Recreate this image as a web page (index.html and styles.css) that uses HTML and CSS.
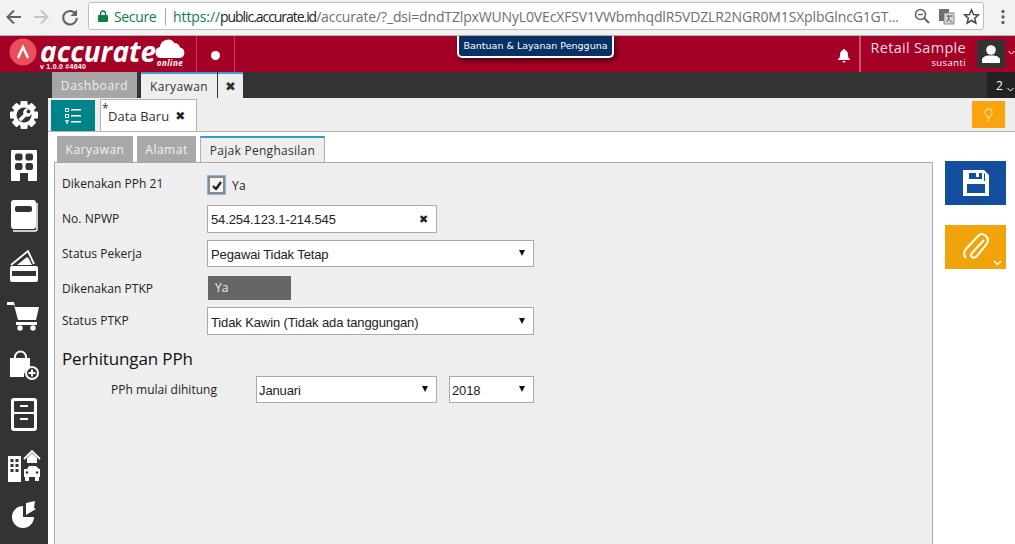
FILE: index.html
```html
<!DOCTYPE html>
<html lang="id">
<head>
<meta charset="utf-8">
<title>Accurate Online</title>
<link rel="stylesheet" href="styles.css">
</head>
<body>
<div class="chrome">
  <svg class="nav" width="22" height="22" viewBox="0 0 22 22"><path d="M18 11H5M11 4.500L4.500 11l6.500 6.500" fill="none" stroke="#5f6368" stroke-width="2"/></svg>
  <svg class="nav fwd" width="22" height="22" viewBox="0 0 22 22"><path d="M4 11h13M11 4.500l6.500 6.500-6.500 6.500" fill="none" stroke="#c4c4c4" stroke-width="2"/></svg>
  <svg class="nav rel" width="22" height="22" viewBox="0 0 22 22"><path d="M17 8.500A6.800 6.800 0 1 0 17.800 12" fill="none" stroke="#5f6368" stroke-width="2"/><path d="M18 3.500v6.500h-6.500z" fill="#5f6368"/></svg>
  <div class="omnibox">
    <svg class="lock" width="10" height="12" viewBox="0 0 10 12"><path d="M2.500 5V3.500a2.500 2.500 0 0 1 5 0V5" fill="none" stroke="#0b8043" stroke-width="1.400"/><rect y="5" width="10" height="7" rx="1" fill="#0b8043"/></svg>
    <span class="secure">Secure</span>
    <span class="sep"></span>
    <span class="url"><span class="https">https://</span><span class="host">public.accurate.id</span>/accurate/?_dsi=dndTZlpxWUNyL0VEcXFSV1VWbmhqdlR5VDZLR2NGR0M1SXplbGlncG1GT...</span>
    <svg class="omni-i" width="18" height="18" viewBox="0 0 18 18"><circle cx="7.500" cy="7.500" r="5" fill="none" stroke="#5f6368" stroke-width="1.600"/><path d="M11 11l5 5" stroke="#5f6368" stroke-width="2"/><path d="M5 7.500h5" stroke="#5f6368" stroke-width="1.400"/></svg>
    <svg class="omni-i tr" width="17" height="17" viewBox="0 0 17 17"><rect x="1" y="1" width="10" height="12" fill="#6b6f73"/><rect x="6" y="5" width="10" height="11" fill="#d9d9d9" stroke="#777" stroke-width=".8"/><path d="M8.500 8h6M11 8c0 3-1.500 5-2.500 6M10 10c1 2 3 4 4.500 4.500" stroke="#555" fill="none"/></svg>
    <svg class="omni-i star" width="17" height="17" viewBox="0 0 17 17"><path d="M8.500 1.800l2 4.700 5 .4-3.800 3.300 1.200 5-4.400-2.700-4.400 2.700 1.200-5L1.500 6.900l5-.4z" fill="none" stroke="#4a4a4a" stroke-width="1.500"/></svg>
  </div>
  <svg class="dots" width="6" height="16" viewBox="0 0 6 16"><circle cx="3" cy="2.500" r="1.700" fill="#5f6368"/><circle cx="3" cy="8" r="1.700" fill="#5f6368"/><circle cx="3" cy="13.500" r="1.700" fill="#5f6368"/></svg>
</div>

<header class="topbar">
  <div class="logo">
    <svg class="logo-mark" width="28" height="28" viewBox="0 0 28 28"><circle cx="14" cy="14" r="13.500" fill="#e8505b"/><path d="M9 20l5-11 5 11" fill="none" stroke="#fff" stroke-width="2.400"/></svg>
    <div class="logo-word">
      <span class="logo-name">accurate</span>
      <span class="logo-ver">v 1.0.0 #4640</span>
    </div>
    <div class="logo-cloud">
      <svg width="30" height="20" viewBox="0 0 30 20"><path d="M6 20a5.500 5.500 0 0 1-1-10.900A8 8 0 0 1 19.500 5 6 6 0 0 1 25 9.500 5.300 5.300 0 0 1 24.500 20z" fill="#fff"/></svg>
      <span class="logo-online">online</span>
    </div>
  </div>
  <div class="dot-cell"><span class="dot"></span></div>
  <div class="topbar-fill"></div>
  <svg class="bell" width="14" height="15" viewBox="0 0 14 15"><path d="M7 1a1.200 1.200 0 0 1 1.200 1.300C10.500 3 11 5 11 7.500c0 2 1 3 2.500 4.500H.5C2 10.500 3 9.500 3 7.500 3 5 3.500 3 5.800 2.300A1.200 1.200 0 0 1 7 1zM5.500 13h3a1.500 1.500 0 0 1-3 0z" fill="#fff"/></svg>
  <div class="account">
    <span class="acc-name">Retail Sample</span>
    <span class="acc-user">susanti</span>
  </div>
  <div class="avatar">
    <svg width="18" height="20" viewBox="0 0 18 20"><circle cx="9" cy="6" r="4.800" fill="#fff"/><path d="M0 19v-3c0-3 3.500-4 6-4.500h6c2.500.5 6 1.500 6 4.500v3z" fill="#fff"/></svg>
  </div>
  <svg class="chev" width="7" height="5" viewBox="0 0 7 5"><path d="M.5 1l3 3 3-3" fill="none" stroke="#fff"/></svg>
</header>
<div class="help-tip">Bantuan &amp; Layanan Pengguna</div>

<nav class="tabbar">
  <span class="tab tab-off">Dashboard</span>
  <span class="tab tab-on">Karyawan</span>
  <span class="tab-close">&#10006;</span>
  <span class="tabbar-fill"></span>
  <span class="count">2<svg width="7" height="5" viewBox="0 0 7 5"><path d="M.5 1l3 3 3-3" fill="none" stroke="#fff"/></svg></span>
</nav>

<div class="body">
  <aside class="sidebar">
    <svg width="30" height="30" viewBox="0 0 30 30">
      <g fill="#fff">
        <circle cx="15" cy="15" r="11"/>
        <rect x="11.500" y="1" width="7" height="28" rx="1"/>
        <rect x="11.500" y="1" width="7" height="28" rx="1" transform="rotate(45 15 15)"/>
        <rect x="11.500" y="1" width="7" height="28" rx="1" transform="rotate(90 15 15)"/>
        <rect x="11.500" y="1" width="7" height="28" rx="1" transform="rotate(135 15 15)"/>
      </g>
      <circle cx="15" cy="15" r="7.500" fill="#333"/>
      <path d="M9.500 19l5-5a4.300 4.300 0 0 1 5.500-5.500l-2.500 2.500.5 2 2 .5 2.500-2.500a4.300 4.300 0 0 1-5.500 5.500l-5 5z" fill="#fff"/>
    </svg>
    <svg width="30" height="34" viewBox="0 0 30 34"><path fill="#fff" d="M3 2h24a1 1 0 0 1 1 1v30H2V3a1 1 0 0 1 1-1z"/><g fill="#333"><rect x="6" y="5.500" width="7.500" height="7" rx="2"/><rect x="16.500" y="5.500" width="7.500" height="7" rx="2"/><rect x="6" y="15" width="7.500" height="7" rx="2"/><rect x="16.500" y="15" width="7.500" height="7" rx="2"/><rect x="11" y="25" width="8" height="8"/></g></svg>
    <svg width="30" height="32" viewBox="0 0 30 32"><rect x="2" y="0" width="25" height="29" rx="3" fill="#fff"/><path d="M4 31h22a2 2 0 0 0 2-2V3" fill="none" stroke="#fff" stroke-width="1.500"/><rect x="6" y="6" width="17" height="6" rx="2" fill="#333"/></svg>
    <svg width="30" height="32" viewBox="0 0 30 32"><path d="M2 15L19 1l6 13" fill="none" stroke="#fff" stroke-width="1.800"/><path d="M8 15l10-8 2 2 3 6z" fill="#fff"/><rect x="1" y="16" width="28" height="16" rx="2" fill="#fff"/><rect x="3" y="21" width="24" height="5" fill="#333"/></svg>
    <svg width="34" height="32" viewBox="0 0 34 32"><path d="M0 2h7l1 5h24l-3 13H11L7 5H0z" fill="#fff"/><path d="M9 22h21v3H9z" fill="#fff"/><circle cx="13" cy="28" r="2.700" fill="#fff"/><circle cx="26" cy="28" r="2.700" fill="#fff"/></svg>
    <svg width="30" height="30" viewBox="0 0 30 30"><path d="M6 10V7a5 5 0 0 1 11 0v3" fill="none" stroke="#fff" stroke-width="2"/><path d="M1 8h20v10a8 8 0 0 0-6 9H1z" fill="#fff"/><circle cx="23" cy="23" r="6" fill="none" stroke="#fff" stroke-width="2"/><path d="M23 19.500v7M19.500 23h7" stroke="#fff" stroke-width="2"/></svg>
    <svg width="26" height="33" viewBox="0 0 26 33"><rect x="0" y="0" width="26" height="33" rx="3" fill="#fff"/><rect x="3" y="3" width="20" height="11" rx="1" fill="#333"/><rect x="3" y="16" width="20" height="14" rx="1" fill="#333"/><rect x="9" y="7" width="8" height="2" fill="#fff"/><rect x="9" y="20" width="8" height="2" fill="#fff"/></svg>
    <svg width="34" height="33" viewBox="0 0 34 33"><rect x="1" y="7" width="13" height="26" fill="#fff"/><g fill="#333"><rect x="3.500" y="10" width="3" height="3"/><rect x="8.500" y="10" width="3" height="3"/><rect x="3.500" y="15" width="3" height="3"/><rect x="8.500" y="15" width="3" height="3"/><rect x="3.500" y="20" width="3" height="3"/><rect x="8.500" y="20" width="3" height="3"/></g><path d="M17 10l8-8 8 8" fill="none" stroke="#fff" stroke-width="1.800"/><path d="M20 9l5-5 5 5v5H20z" fill="#fff"/><path d="M20 20l2-3h7l3 3h1v8H17v-8z" fill="#fff"/><rect x="18" y="28" width="4" height="4" fill="#fff"/><rect x="28" y="28" width="4" height="4" fill="#fff"/><circle cx="20" cy="23.500" r="1.300" fill="#333"/><circle cx="30" cy="23.500" r="1.300" fill="#333"/></svg>
    <svg width="26" height="28" viewBox="0 0 26 28"><path d="M12 6a11 11 0 1 0 11 11H12z" fill="#fff"/><path d="M15 15V3l9-2-1 7 2 1z" fill="#fff"/></svg>
  </aside>

  <main class="main">
    <div class="toolbar">
      <button class="teal" type="button">
        <svg width="16" height="16" viewBox="0 0 16 16"><g fill="none" stroke="#fff"><rect x=".5" y=".5" width="3" height="3"/><rect x=".5" y="6.500" width="3" height="3"/><path d="M.5 12.500h3L2 15.500z"/></g><g fill="#fff"><rect x="6" y="1" width="10" height="1.500"/><rect x="6" y="7" width="10" height="1.500"/><rect x="6" y="13" width="10" height="1.500"/></g></svg>
      </button>
      <div class="doc-tab"><sup class="star-mark">*</sup><span>Data Baru</span><span class="doc-close">&#10006;</span></div>
      <div class="toolbar-fill"></div>
      <button class="hint" type="button">
        <svg width="9" height="13" viewBox="0 0 11 15"><path d="M3.500 10.500C3 8.500 1 7.500 1 5a4.500 4.500 0 0 1 9 0c0 2.500-2 3.500-2.500 5.500z" fill="none" stroke="#ffe9b0" stroke-width="1.200"/><path d="M3.500 12h4v1h-4zM4.500 14h2v1h-2z" fill="#ffe9b0"/></svg>
      </button>
    </div>

    <div class="content">
      <div class="left">
        <div class="subtabs">
          <span class="subtab off">Karyawan</span>
          <span class="subtab off">Alamat</span>
          <span class="subtab on">Pajak Penghasilan</span>
        </div>
        <form class="panel">
          <div class="row r1">
            <label class="lbl lbl-1">Dikenakan PPh 21</label>
            <span class="check"><svg width="10" height="9" viewBox="0 0 10 9"><path d="M1 5l3 3 5-7" fill="none" stroke="#222" stroke-width="2.400"/></svg></span>
            <span class="check-txt">Ya</span>
          </div>
          <div class="row r2">
            <label class="lbl lbl-2">No. NPWP</label>
            <div class="field w-short">54.254.123.1-214.545<span class="x">&#10006;</span></div>
          </div>
          <div class="row r3">
            <label class="lbl">Status Pekerja</label>
            <div class="field select w-long">Pegawai Tidak Tetap<span class="arrow"></span></div>
          </div>
          <div class="row r4">
            <label class="lbl">Dikenakan PTKP</label>
            <div class="readonly">Ya</div>
          </div>
          <div class="row r5">
            <label class="lbl lbl-5">Status PTKP</label>
            <div class="field select w-long">Tidak Kawin (Tidak ada tanggungan)<span class="arrow"></span></div>
          </div>
          <h2 class="section">Perhitungan PPh</h2>
          <div class="row r6">
            <label class="lbl lbl-6">PPh mulai dihitung</label>
            <div class="field select w-month">Januari<span class="arrow"></span></div>
            <div class="field select w-year">2018<span class="arrow"></span></div>
          </div>
        </form>
      </div>
      <div class="actions">
        <button class="act save" type="button">
          <svg width="28" height="28" viewBox="0 0 28 28"><path fill-rule="evenodd" fill="#fff" d="M1 1h21l5 5v21H1zM4 4v8h19V4.500h-1V12h0H4zM7 4v6h13V4h-3v4h-3V4zM5 15v9h18v-9z"/></svg>
        </button>
        <button class="act clip" type="button">
          <svg width="26" height="28" viewBox="0 0 26 28"><path d="M21 8L9 21c-2 2-1 3 0 4s3 1 5-1l9-11c3-4 2-7 0-9s-5-3-8 0L3 17c-3 4-2 7 0 9" transform="translate(0 -1)" fill="none" stroke="#fff" stroke-width="2"/></svg>
          <svg class="clip-chev" width="9" height="6" viewBox="0 0 9 6"><path d="M1 1l3.500 3.500L8 1" fill="none" stroke="#fff" stroke-width="1.400"/></svg>
        </button>
      </div>
    </div>
  </main>
</div>
</body>
</html>
```
FILE: styles.css
```css
* { box-sizing: border-box; }
html, body { margin: 0; height: 544px; overflow: hidden; }
body { font-family: "Open Sans", "Liberation Sans", sans-serif; background: #fff; color: #222; position: relative; }
button { border: 0; padding: 0; display: flex; align-items: center; justify-content: center; }

.chrome { height: 36px; background: #f2f2f2; border-bottom: 1px solid #b5b5b5; display: flex; align-items: center; }
.nav { margin-left: 3px; margin-bottom: 1px; flex: none; }
.nav.fwd { margin-left: 5px; }
.nav.rel { margin-left: 7px; }
.omnibox { margin-left: 7px; width: 896px; height: 28px; margin-bottom: 3px; background: #fff; border: 1px solid #bdbdbd; border-radius: 3px; display: flex; align-items: center; font-size: 14px; white-space: nowrap; }
.lock { margin-left: 9px; flex: none; }
.secure { margin-left: 6px; color: #0b8043; font-size: 14px; letter-spacing: -.35px; width: 45px; flex: none; }
.sep { margin-left: 6px; width: 1px; height: 17px; background: #a8a8a8; flex: none; }
.url { margin-left: 7px; width: 726px; flex: none; color: #6f6f6f; font-family: "Open Sans", sans-serif; font-size: 14px; letter-spacing: -.15px; overflow: hidden; }
.https { color: #0b8043; letter-spacing: -.1px; }
.host { color: #222; letter-spacing: -1.05px; }
.omni-i { flex: none; margin-left: 14px; }
.omni-i.tr { margin-left: 7px; }
.omni-i.star { margin-left: 8px; }
.dots { margin-left: 16px; margin-bottom: 2px; flex: none; }

.topbar { height: 36px; background: #a50026; display: flex; align-items: stretch; color: #fff; }
.logo { width: 197px; flex: none; display: flex; padding-left: 9px; border-right: 1px solid #c0405c; }
.logo-mark { margin-top: 2px; flex: none; }
.logo-word { margin-left: 3px; width: 115px; display: flex; flex-direction: column; }
.logo-name { font-family: "Open Sans", sans-serif; font-weight: 700; font-style: italic; font-size: 28px; line-height: 24px; margin-top: 3px; }
.logo-ver { font-family: "Liberation Sans", sans-serif; font-size: 7px; font-weight: 700; line-height: 7px; letter-spacing: .25px; margin-top: 0; }
.logo-cloud { display: flex; flex-direction: column; align-items: center; margin-top: 2px; width: 30px; }
.logo-online { font-family: "Open Sans", sans-serif; font-size: 8px; font-weight: 700; font-style: italic; line-height: 9px; letter-spacing: .5px; }
.dot-cell { width: 38px; flex: none; border-right: 1px solid #c0405c; display: flex; align-items: center; justify-content: center; padding-top: 2px; }
.dot { width: 9px; height: 9px; border-radius: 50%; background: #fff; }
.topbar-fill { flex: 1; }
.bell { align-self: center; margin-right: 8px; margin-top: 2px; }
.account { width: 107px; flex: none; border-left: 2px solid #c9566e; display: flex; flex-direction: column; align-items: flex-end; padding-top: 3px; font-family: "Open Sans", sans-serif; }
.acc-name { font-size: 14.500px; line-height: 18px; letter-spacing: .3px; color: #f0dde1; }
.acc-user { font-size: 9.500px; line-height: 12px; letter-spacing: .4px; }
.avatar { width: 28px; height: 28px; margin: 4px 0 0 11px; background: #333; display: flex; align-items: center; justify-content: center; flex: none; }
.chev { margin: 14px 0 0 3px; flex: none; }

.help-tip { position: absolute; left: 457px; top: 36px; width: 157px; height: 22px; background: #0a3165; border: 2px solid #fff; border-top: 0; border-radius: 0 0 5px 5px; color: #fff; font-family: "DejaVu Sans", sans-serif; font-size: 9.500px; line-height: 20px; text-align: center; box-shadow: 2px 3px 5px rgba(0,0,0,.55); white-space: nowrap; }

.tabbar { height: 26px; background: #333; display: flex; padding-left: 52px; font-size: 12px; }
.tab { display: flex; align-items: center; justify-content: center; flex: none; }
.tab-off { width: 85px; background: #a6a6a6; color: #eee; letter-spacing: .6px; margin-right: 4px; }
.tab-on { width: 76px; background: #eee; color: #333; border-top: 2px solid #3f9bd5; letter-spacing: .4px; }
.tab-close { width: 25px; margin-left: 1px; background: #eee; border-top: 2px solid #3f9bd5; color: #333; font-size: 13px; display: flex; align-items: center; justify-content: center; font-family: "DejaVu Sans", sans-serif; }
.tabbar-fill { flex: 1; }
.count { width: 28px; background: #222; color: #fff; font-size: 12px; display: flex; align-items: center; padding-left: 9px; gap: 4px; flex: none; }
.count svg { margin-top: 8px; }

.body { display: flex; height: 446px; }
.sidebar { width: 48px; flex: none; background: #333; display: flex; flex-direction: column; align-items: center; padding-top: 2px; gap: 18px; }
.sidebar svg { flex: none; }
.main { flex: 1; min-width: 0; display: flex; flex-direction: column; }

.toolbar { height: 34px; flex: none; background: #eee; border-bottom: 1px solid #b4b4b4; display: flex; padding-left: 3px; }
.teal { width: 44px; height: 31px; margin-top: 2px; background: #00848a; }
.doc-tab { margin: 1px 0 0 5px; width: 97px; height: 32px; background: #fff; border: 1px solid #b4b4b4; border-bottom: 0; display: flex; align-items: center; font-family: "Open Sans", sans-serif; font-size: 13px; letter-spacing: .05px; color: #333; padding-left: 1px; }
.star-mark { font-size: 12px; line-height: 1; align-self: flex-start; margin: 3px 0 0 0; width: 6px; }
.doc-close { margin-left: 6px; font-family: "DejaVu Sans", sans-serif; font-size: 12px; color: #222; }
.toolbar-fill { flex: 1; }
.hint { width: 33px; height: 27px; margin: 3px 10px 0 0; background: #f9a30f; }

.content { flex: 1; min-height: 0; display: flex; padding: 4px 9px 0 6px; }
.left { width: 879px; flex: none; display: flex; flex-direction: column; }
.subtabs { height: 26px; flex: none; display: flex; padding-left: 3px; gap: 4px; font-size: 12px; letter-spacing: .5px; }
.subtab { display: flex; align-items: center; justify-content: center; }
.subtab.off { background: #a8a8a8; color: #f2f2f2; }
.subtab.off:nth-child(1) { width: 76px; }
.subtab.off:nth-child(2) { width: 59px; }
.subtab.on { width: 125px; background: #eee; border: 1px solid #b0b0b0; border-top: 2px solid #2a9fd0; border-bottom: 0; color: #333; letter-spacing: .28px; }
.panel { flex: 1; background: #eee; border: 1px solid #aaa; border-bottom: 0; margin: 0; padding: 0 0 0 7px; }

.row { display: flex; align-items: center; }
.lbl { width: 145px; flex: none; font-size: 12px; letter-spacing: .03px; color: #222; }
.r1 { height: 32px; margin-top: 6px; }
.lbl-1 { margin-top: -4px; }
.lbl-2 { margin-top: -2px; }
.check { width: 17px; height: 18px; margin-left: 1px; background: #f4f4f4; border: 2px solid #8a8a8a; outline: 1px solid #8ab6dc; display: flex; align-items: center; justify-content: center; }
.check-txt { margin-left: 7px; font-size: 12px; letter-spacing: .3px; }
.r2 { height: 28px; margin-top: 4px; }
.r3 { height: 27px; margin-top: 7px; }
.r4 { height: 24px; margin-top: 9px; }
.r5 { height: 28px; margin-top: 7px; }
.lbl-5 { margin-top: -2px; }
.r6 { height: 27px; margin-top: 5px; }
.field { height: 100%; flex: none; background: #fff; border: 1px solid #aaa; display: flex; align-items: center; justify-content: space-between; padding: 0 8px 0 3px; font-family: "Liberation Sans", sans-serif; font-size: 13px; letter-spacing: -.12px; color: #222; }
.select { padding-top: 2px; }
.w-short { width: 230px; }
.w-long { width: 327px; }
.w-month { width: 181px; padding-left: 2px; }
.w-year { width: 85px; margin-left: 12px; padding-left: 2px; }
.x { font-family: "DejaVu Sans", sans-serif; font-size: 11px; color: #222; }
.arrow { width: 0; height: 0; border-left: 3.500px solid transparent; border-right: 3.500px solid transparent; border-top: 6px solid #111; margin-top: -3px; }
.readonly { width: 83px; height: 100%; margin-left: 1px; background: #666; color: #eee; font-size: 12px; padding-left: 7px; line-height: 24px; }
.section { margin: 12px 0 0; height: 24px; font-size: 17px; line-height: 24px; font-weight: 400; letter-spacing: -.13px; color: #111; }
.lbl-6 { width: 194px; padding-left: 49px; }

.actions { flex: 1; display: flex; flex-direction: column; align-items: flex-end; padding-top: 25px; gap: 20px; }
.act { width: 61px; height: 44px; position: relative; }
.save { background: #144e9e; }
.clip { background: #f0a30a; }
.clip-chev { position: absolute; right: 4px; bottom: 3px; }
```
